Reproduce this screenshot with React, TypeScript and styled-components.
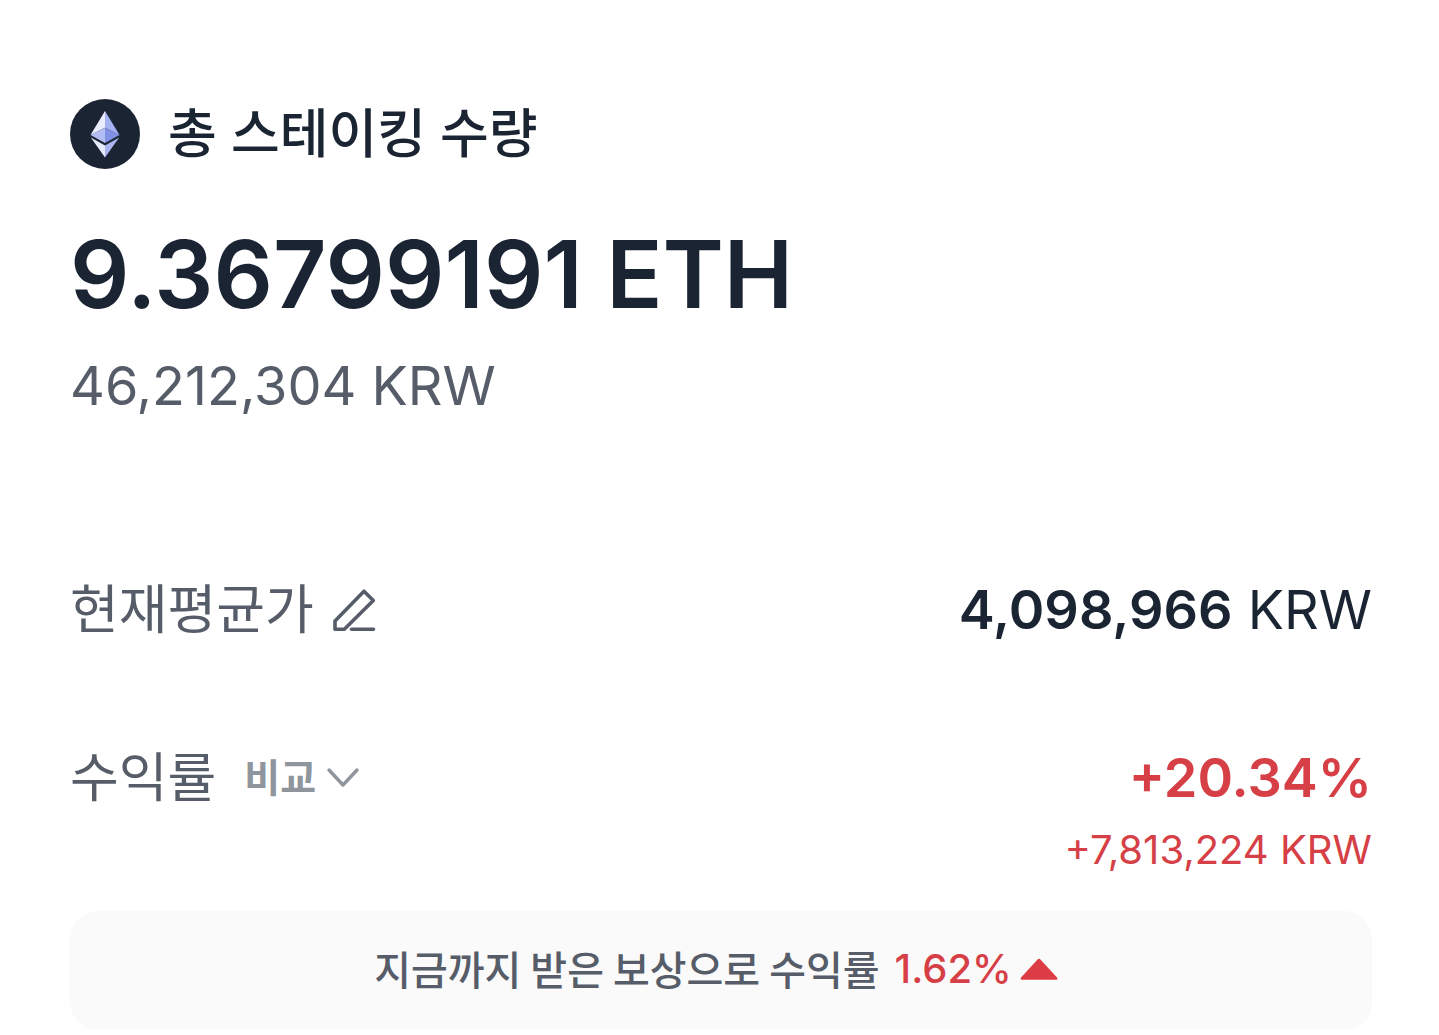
import React from "react";
import styled, { createGlobalStyle } from "styled-components";

const GlobalStyle = createGlobalStyle`
  *, *::before, *::after { box-sizing: border-box; }
  body { margin: 0; background: #fff; color: #1b2433; font-family: Inter, "Noto Sans CJK KR", sans-serif; }
  h1, p, dl, dd, dt { margin: 0; font-weight: 400; }
  button { font: inherit; border: 0; padding: 0; background: none; color: inherit; cursor: pointer; }
`;

const Page = styled.main`
  display: flex;
  flex-direction: column;
  padding: 94px 67px 5px 70px;
`;

const Header = styled.header`
  display: flex;
  align-items: center;
  gap: 28px;
  height: 80px;
`;

const Title = styled.h1`
  font-size: 53px;
  line-height: 80px;
  font-weight: 500;
`;

const Amount = styled.p`
  margin-top: 44px;
  font-size: 93px;
  line-height: 112px;
  font-weight: 600;
`;

const Converted = styled.p`
  margin-top: 24px;
  font-size: 54px;
  line-height: 64px;
  color: #565d69;
`;

const Rows = styled.dl`
  display: flex;
  flex-direction: column;
  gap: 88px;
  margin-top: 152px;
`;

const Row = styled.div`
  display: flex;
  justify-content: space-between;
  align-items: flex-start;
`;

const Label = styled.dt<{ $gap: number }>`
  display: flex;
  align-items: center;
  gap: ${(p) => p.$gap}px;
  font-size: 53px;
  line-height: 80px;
  color: #565d69;
`;

const Value = styled.dd`
  font-size: 54px;
  line-height: 80px;
  text-align: right;
`;

const Strong = styled.strong`
  font-weight: 600;
`;

const Profit = styled(Value)`
  color: #d63f46;
`;

const ProfitAmount = styled.p`
  font-size: 40px;
  line-height: 64px;
`;

const IconButton = styled.button`
  display: flex;
`;

const CompareButton = styled.button`
  display: flex;
  align-items: center;
  gap: 10px;
  && { font-size: 39px; font-weight: 700; line-height: 56px; color: #8f959d; }
`;

const Notice = styled.p`
  display: flex;
  justify-content: center;
  align-items: center;
  gap: 15px;
  margin-top: 29px;
  padding: 28px 10px 32px 0;
  border-radius: 28px;
  background: #fafafa;
  color: #565d69;
  font-size: 40px;
  line-height: 59px;
`;

const NoticeText = styled.span`
  font-family: "Noto Sans CJK KR", sans-serif;
  font-weight: 500;
`;

const Rate = styled.span`
  display: flex;
  align-items: center;
  gap: 8px;
  font-weight: 500;
  color: #d63f46;
`;

const EthLogo = () => (
  <svg width="70" height="70" viewBox="0 0 70 70" aria-hidden="true">
    <circle cx="35" cy="35" r="35" fill="#1b2433" />
    <path d="M35 12 20.5 36 35 28.7z" fill="#e9ecfc" />
    <path d="M35 12 49.5 36 35 28.7z" fill="#a6b1f1" />
    <path d="M20.5 36 35 28.7V44z" fill="#b3bcf3" />
    <path d="M49.5 36 35 28.7V44z" fill="#8191e6" />
    <path d="M20.8 38.4 35 46.6v12z" fill="#e6e9fc" />
    <path d="M49.2 38.4 35 46.6v12z" fill="#aab4f1" />
  </svg>
);

const PencilIcon = () => (
  <svg width="44" height="44" viewBox="0 0 44 44" fill="none" stroke="#565d69" strokeWidth="3.6" strokeLinecap="round" strokeLinejoin="round" aria-hidden="true">
    <path d="M3 41.300V33L32 3.200l9.300 9.300L12.300 41.300zM19.500 41.300h22" />
  </svg>
);

const ChevronIcon = () => (
  <svg width="34" height="22" viewBox="0 0 34 22" fill="none" stroke="#8f959d" strokeWidth="3.4" strokeLinecap="round" strokeLinejoin="round" aria-hidden="true">
    <path d="M3 3l14 15L31 3" />
  </svg>
);

const UpIcon = () => (
  <svg width="38" height="22" viewBox="0 0 38 22" fill="#dc3c44" aria-hidden="true">
    <path d="M17.800 1.200q1.200-1 2.400 0L37 19.500q1.200 2.300-1 2.300H2q-2.200 0-1-2.300z" />
  </svg>
);

export default function App() {
  return (
    <>
      <GlobalStyle />
      <Page>
        <Header>
          <EthLogo />
          <Title>총 스테이킹 수량</Title>
        </Header>
        <Amount>9.36799191 ETH</Amount>
        <Converted>46,212,304 KRW</Converted>
        <Rows>
          <Row>
            <Label $gap={18}>
              현재평균가
              <IconButton type="button" aria-label="현재평균가 수정"><PencilIcon /></IconButton>
            </Label>
            <Value><Strong>4,098,966</Strong> KRW</Value>
          </Row>
          <Row>
            <Label $gap={28}>
              수익률
              <CompareButton type="button">비교<ChevronIcon /></CompareButton>
            </Label>
            <Profit>
              <Strong>+20.34%</Strong>
              <ProfitAmount>+7,813,224 KRW</ProfitAmount>
            </Profit>
          </Row>
        </Rows>
        <Notice>
          <NoticeText>지금까지 받은 보상으로 수익률</NoticeText>
          <Rate>1.62%<UpIcon /></Rate>
        </Notice>
      </Page>
    </>
  );
}
